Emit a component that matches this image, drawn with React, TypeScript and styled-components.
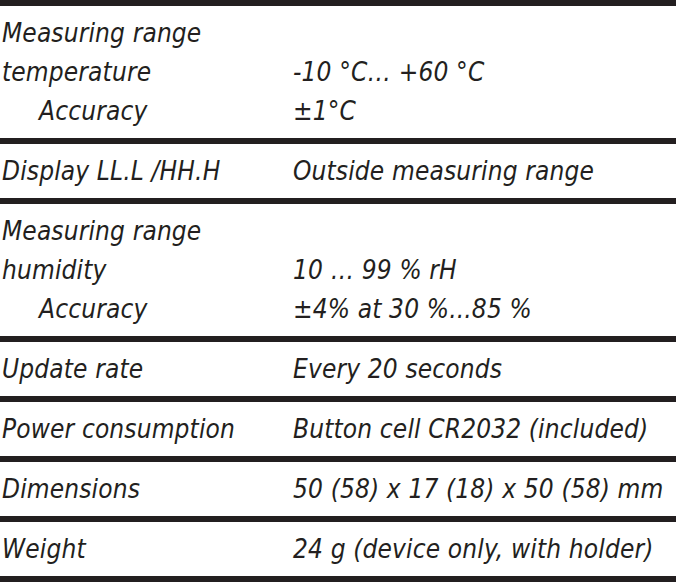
import React from 'react';
import styled, { createGlobalStyle } from 'styled-components';

const GlobalStyle = createGlobalStyle`
  html, body {
    margin: 0;
    padding: 0;
    background: #ffffff;
  }
`;

const Table = styled.div`
  width: 676px;
  font-family: 'DejaVu Sans Condensed', 'Liberation Sans', sans-serif;
  font-style: italic;
  font-size: 26px;
  letter-spacing: 0.15px;
  color: #231f20;
  border-bottom: 6px solid #231f20;
`;

const Row = styled.div`
  display: grid;
  grid-template-columns: 291px 1fr;
  border-top: 6px solid #231f20;
  padding: 7px 0 8px;
`;

const Cell = styled.div`
  display: flex;
  flex-direction: column;
`;

const Line = styled.div<{ $indent?: boolean }>`
  height: 39px;
  line-height: 40px;
  white-space: nowrap;
  padding-left: ${({ $indent }) => ($indent ? '39px' : '2px')};
`;

type Spec = {
  label: { text: string; indent?: boolean }[];
  value: string[];
};

const specs: Spec[] = [
  {
    label: [{ text: 'Measuring range' }, { text: 'temperature' }, { text: 'Accuracy', indent: true }],
    value: ['', '-10 °C… +60 °C', '±1°C'],
  },
  { label: [{ text: 'Display LL.L /HH.H' }], value: ['Outside measuring range'] },
  {
    label: [{ text: 'Measuring range' }, { text: 'humidity' }, { text: 'Accuracy', indent: true }],
    value: ['', '10 … 99 % rH', '±4% at 30 %...85 %'],
  },
  { label: [{ text: 'Update rate' }], value: ['Every 20 seconds'] },
  { label: [{ text: 'Power consumption' }], value: ['Button cell CR2032 (included)'] },
  { label: [{ text: 'Dimensions' }], value: ['50 (58) x 17 (18) x 50 (58) mm'] },
  { label: [{ text: 'Weight' }], value: ['24 g (device only, with holder)'] },
];

const App = () => (
  <>
    <GlobalStyle />
    <Table>
      {specs.map((spec, i) => (
        <Row key={i}>
          <Cell>
            {spec.label.map((l, j) => (
              <Line key={j} $indent={l.indent}>
                {l.text}
              </Line>
            ))}
          </Cell>
          <Cell>
            {spec.value.map((v, j) => (
              <Line key={j}>{v || '\u00a0'}</Line>
            ))}
          </Cell>
        </Row>
      ))}
    </Table>
  </>
);

export default App;
